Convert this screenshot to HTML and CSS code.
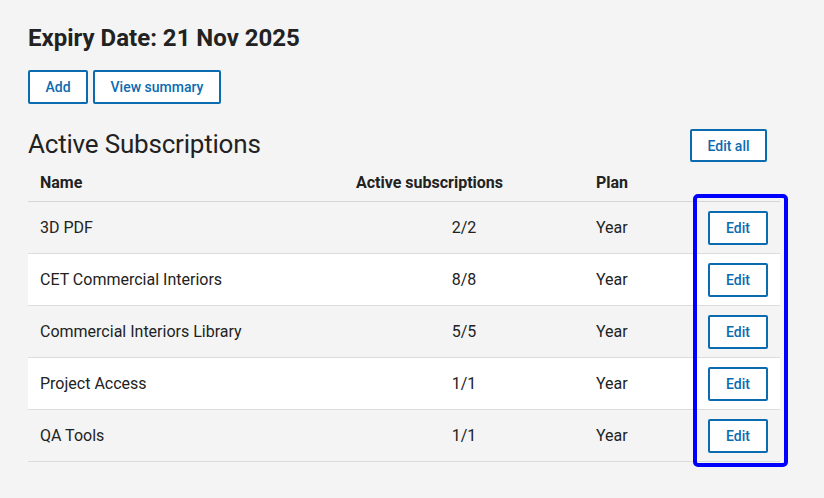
FILE: index.html
```html
<!DOCTYPE html>
<html>
<head>
<meta charset="utf-8">
<link rel="stylesheet" href="styles.css">
</head>
<body>
<main class="page">
  <h1 class="expiry">Expiry Date: 21 Nov 2025</h1>
  <div class="actions">
    <button class="btn btn-add">Add</button>
    <button class="btn btn-summary">View summary</button>
  </div>
  <div class="section-head">
    <h2 class="section-title">Active Subscriptions</h2>
    <button class="btn btn-editall">Edit all</button>
  </div>
  <div class="table-wrap">
    <table class="subs">
      <colgroup>
        <col class="w-name">
        <col class="w-count">
        <col class="w-plan">
        <col class="w-act">
      </colgroup>
      <thead>
        <tr>
          <th>Name</th>
          <th>Active subscriptions</th>
          <th>Plan</th>
          <th></th>
        </tr>
      </thead>
      <tbody>
        <tr><td>3D PDF</td><td class="c-count">2/2</td><td>Year</td><td><button class="btn btn-edit">Edit</button></td></tr>
        <tr><td>CET Commercial Interiors</td><td class="c-count">8/8</td><td>Year</td><td><button class="btn btn-edit">Edit</button></td></tr>
        <tr><td>Commercial Interiors Library</td><td class="c-count">5/5</td><td>Year</td><td><button class="btn btn-edit">Edit</button></td></tr>
        <tr><td>Project Access</td><td class="c-count">1/1</td><td>Year</td><td><button class="btn btn-edit">Edit</button></td></tr>
        <tr><td>QA Tools</td><td class="c-count">1/1</td><td>Year</td><td><button class="btn btn-edit">Edit</button></td></tr>
      </tbody>
    </table>
    <div class="highlight"></div>
  </div>
</main>
</body>
</html>
```
FILE: styles.css
```css
html, body {
  margin: 0;
  padding: 0;
  background: #f4f4f4;
}
body {
  font-family: Roboto, "Liberation Sans", sans-serif;
  color: #222;
  min-height: 498px;
}
.page {
  padding: 24px 0 36px 28px;
  width: 752px;
}
.expiry {
  margin: 0;
  font-size: 24px;
  line-height: 28px;
  font-weight: 700;
  color: #222;
}
.actions {
  display: flex;
  gap: 5px;
  margin-top: 18px;
}
.btn {
  font-family: Roboto, "Liberation Sans", sans-serif;
  font-size: 14px;
  font-weight: 500;
  color: #0b6bb0;
  background: #fff;
  border: 2px solid #0b6bb0;
  border-radius: 2px;
  height: 34px;
  padding: 0;
  cursor: pointer;
}
.btn-add { width: 60px; }
.btn-summary { width: 128px; }
.section-head {
  display: flex;
  justify-content: space-between;
  align-items: center;
  margin-top: 25px;
  padding-right: 13px;
  height: 33px;
}
.section-title {
  margin: 0;
  font-size: 26px;
  font-weight: 400;
  line-height: 30px;
  color: #222;
  letter-spacing: -0.2px;
  transform: translateY(-2px);
}
.btn-editall {
  width: 77px;
  height: 33px;
}
.table-wrap {
  position: relative;
  margin-top: 2px;
  width: 752px;
}
.subs {
  width: 752px;
  border-collapse: collapse;
  table-layout: fixed;
}
.w-name { width: 316px; }
.w-count { width: 240px; }
.w-plan { width: 112px; }
.w-act { width: 84px; }
.subs th, .subs td {
  text-align: left;
  padding: 0 0 0 12px;
  font-size: 16px;
  vertical-align: middle;
}
.subs th {
  font-weight: 700;
  height: 37px;
  border-bottom: 1px solid #d6d6d6;
  color: #222;
}
.subs td {
  height: 51px;
  border-bottom: 1px solid #dcdcdc;
  color: #222;
}
.subs tbody tr:nth-child(odd) { background: #f4f4f4; }
.subs tbody tr:nth-child(even) { background: #fff; }
.subs td.c-count { text-align: center; padding-left: 0; }
.btn-edit {
  width: 60px;
  height: 34px;
  display: block;
}
.highlight {
  position: absolute;
  left: 665px;
  top: 30px;
  width: 95px;
  height: 273px;
  box-sizing: border-box;
  border: 4px solid #0000ff;
  border-radius: 5px;
  pointer-events: none;
}
```
